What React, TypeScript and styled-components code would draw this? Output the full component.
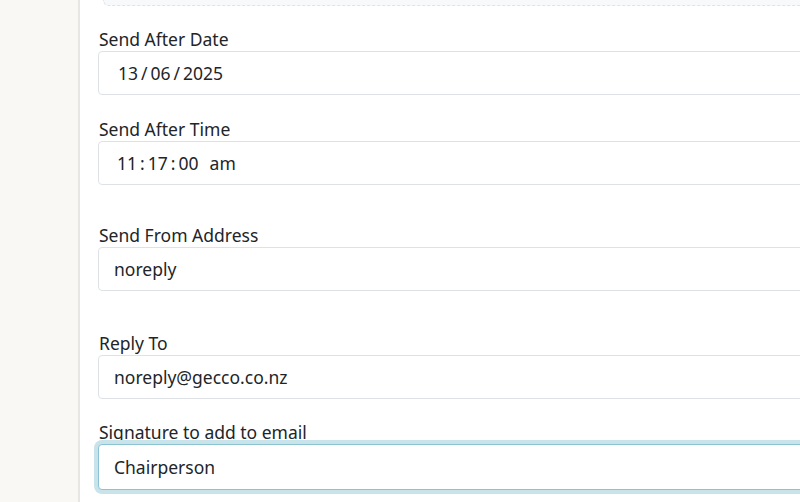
import React from 'react';
import styled, { createGlobalStyle } from 'styled-components';

const GlobalStyle = createGlobalStyle`
  html, body {
    margin: 0;
    padding: 0;
    background: #ffffff;
    overflow: hidden;
  }
  body {
    font-family: "Noto Sans", "Open Sans", sans-serif;
    color: #212529;
  }
`;

const Page = styled.div`
  display: flex;
  width: 100%;
  height: 502px;
`;

const Sidebar = styled.aside`
  flex: 0 0 78px;
  background: #f9f8f4;
  border-right: 2px solid #e6e6e3;
`;

const Main = styled.main`
  flex: 1;
  min-width: 0;
  padding: 0 0 0 18px;
  overflow: hidden;
`;

const DropZoneEdge = styled.div`
  height: 5px;
  margin-left: 5px;
  width: 900px;
  background: #f8f9fa;
  border: 1px dashed #dfe2e6;
  border-top: none;
  border-radius: 0 0 12px 12px;
`;

const Field = styled.div<{ $gap: number }>`
  display: flex;
  flex-direction: column;
  margin-top: ${(p) => p.$gap}px;
`;

const Label = styled.label`
  font-size: 17.5px;
  line-height: 24px;
  padding-left: 1px;
  color: #212529;
`;

const Box = styled.div<{ $focused?: boolean; $indent?: number }>`
  box-sizing: border-box;
  width: 900px;
  height: ${(p) => (p.$focused ? 46 : 44)}px;
  display: flex;
  align-items: center;
  padding-left: ${(p) => p.$indent ?? 15}px;
  font-size: 17.5px;
  color: #212529;
  background: #ffffff;
  border: 1px solid ${(p) => (p.$focused ? '#8cc3d3' : '#dee2e6')};
  border-radius: 4px;
  box-shadow: ${(p) => (p.$focused ? '0 0 0 4px #c9e3ea' : 'none')};
`;

const Segment = styled.span`
  padding: 0 1px;
`;

const Sep = styled.span`
  padding: 0 2px;
`;

export default function App() {
  return (
    <>
      <GlobalStyle />
      <Page>
        <Sidebar />
        <Main>
          <DropZoneEdge />
          <Field $gap={21}>
            <Label>Send After Date</Label>
            <Box $indent={18}>
              <Segment>13</Segment>
              <Sep>/</Sep>
              <Segment>06</Segment>
              <Sep>/</Sep>
              <Segment>2025</Segment>
            </Box>
          </Field>
          <Field $gap={22}>
            <Label>Send After Time</Label>
            <Box $indent={17}>
              <Segment>11</Segment>
              <Sep>:</Sep>
              <Segment>17</Segment>
              <Sep>:</Sep>
              <Segment>00</Segment>
              <Segment>&nbsp;&nbsp;am</Segment>
            </Box>
          </Field>
          <Field $gap={38}>
            <Label>Send From Address</Label>
            <Box>noreply</Box>
          </Field>
          <Field $gap={40}>
            <Label>Reply To</Label>
            <Box>noreply@gecco.co.nz</Box>
          </Field>
          <Field $gap={21}>
            <Label>Signature to add to email</Label>
            <Box $focused>Chairperson</Box>
          </Field>
        </Main>
      </Page>
    </>
  );
}
